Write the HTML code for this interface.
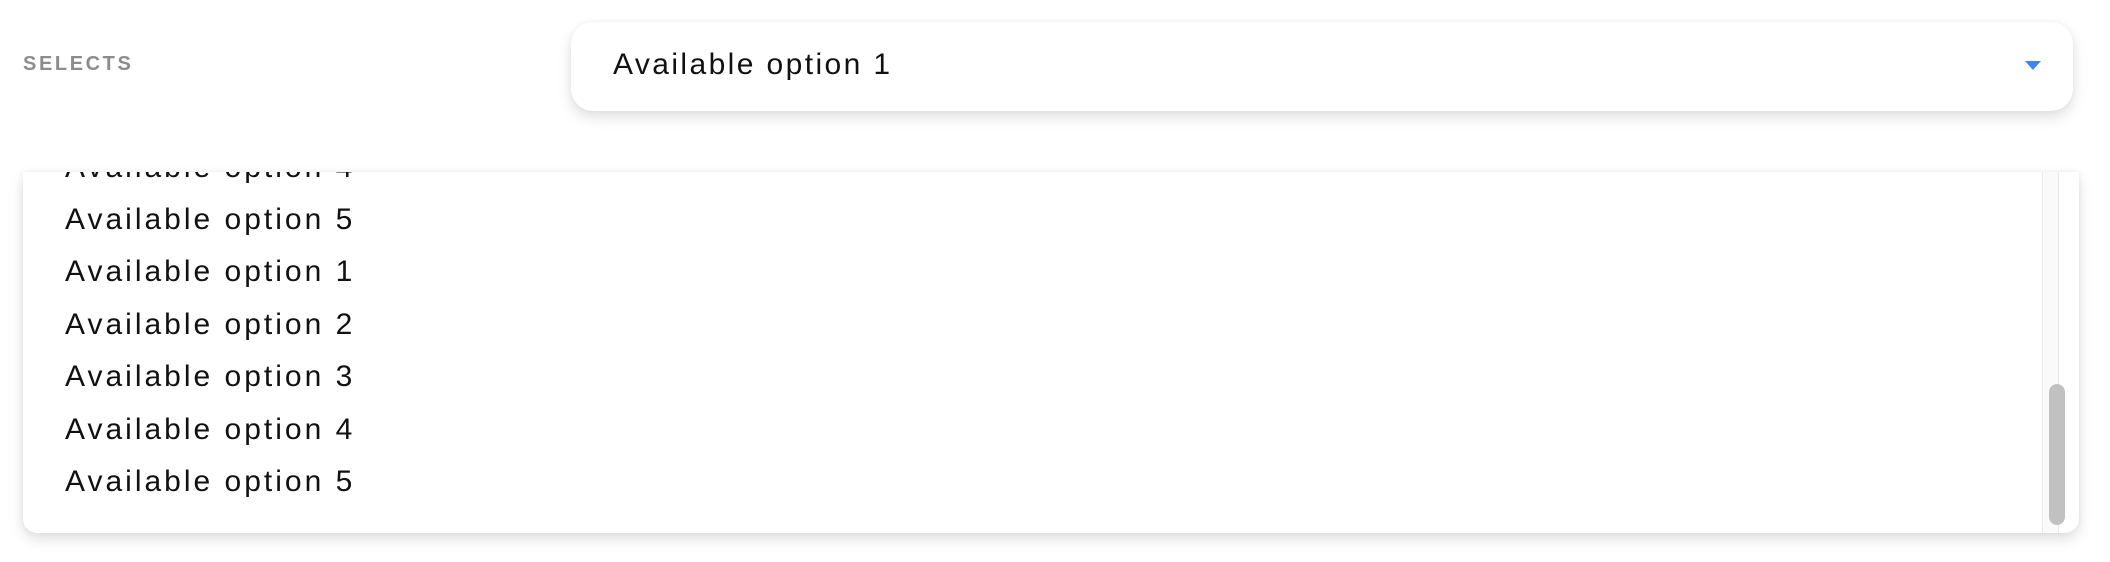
<!DOCTYPE html>
<html><head><style>
html,body{margin:0;padding:0;background:#fff;width:2110px;height:562px;overflow:hidden;font-family:"Liberation Sans",sans-serif;}
.label{position:absolute;left:23px;top:53px;font-size:20px;font-weight:bold;color:#8c8c8c;letter-spacing:2.6px;}
.sel{position:absolute;left:571px;top:22px;width:1502px;height:89px;background:#fff;border-radius:22px;box-shadow:0 6px 14px rgba(0,0,0,0.13),0 0 6px rgba(0,0,0,0.04);}
.sel .t{position:absolute;left:42px;top:26px;font-size:30px;color:#111;letter-spacing:2.4px;}
.arrow{position:absolute;left:1454px;top:39px;width:0;height:0;border-left:8px solid transparent;border-right:8px solid transparent;border-top:9px solid #3d85f5;}
.panel{position:absolute;left:23px;top:172px;width:2056px;height:361px;background:#fff;border-radius:0 0 14px 14px;box-shadow:0 6px 14px rgba(0,0,0,0.13),0 0 6px rgba(0,0,0,0.05);overflow:hidden;}
.item{position:absolute;left:42px;font-size:30px;color:#111;line-height:34px;letter-spacing:3px;}
.track{position:absolute;left:2019px;top:0;width:15px;height:361px;background:#fafafa;border-left:1px solid #e8e8e8;border-right:1px solid #e8e8e8;}
.thumb{position:absolute;left:2026px;top:212px;width:16px;height:141px;background:#c1c1c1;border-radius:8px;}
</style></head><body>
<div class="label">SELECTS</div>
<div class="sel"><div class="t">Available option 1</div><div class="arrow"></div></div>
<div class="panel">
<div class="item" style="top:-21px">Available option 4</div>
<div class="item" style="top:31px">Available option 5</div>
<div class="item" style="top:83px">Available option 1</div>
<div class="item" style="top:136px">Available option 2</div>
<div class="item" style="top:188px">Available option 3</div>
<div class="item" style="top:241px">Available option 4</div>
<div class="item" style="top:293px">Available option 5</div>
<div class="track"></div>
<div class="thumb"></div>
</div>
</body></html>
